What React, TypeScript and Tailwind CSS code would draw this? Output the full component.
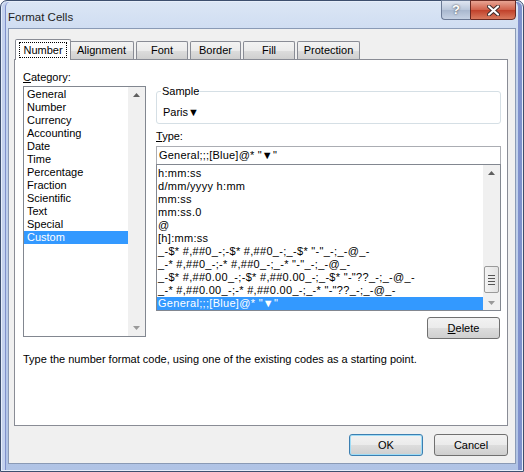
import React from "react";

const categories = [
  "General",
  "Number",
  "Currency",
  "Accounting",
  "Date",
  "Time",
  "Percentage",
  "Fraction",
  "Scientific",
  "Text",
  "Special",
  "Custom",
];

const formats = [
  "h:mm:ss",
  "d/mm/yyyy h:mm",
  "mm:ss",
  "mm:ss.0",
  "@",
  "[h]:mm:ss",
  '_-$* #,##0_-;-$* #,##0_-;_-$* "-"_-;_-@_-',
  '_-* #,##0_-;-* #,##0_-;_-* "-"_-;_-@_-',
  '_-$* #,##0.00_-;-$* #,##0.00_-;_-$* "-"??_-;_-@_-',
  '_-* #,##0.00_-;-* #,##0.00_-;_-* "-"??_-;_-@_-',
  'General;;;[Blue]@* "▼"',
];

const tabs = [
  { t: "Alignment", w: "w-[65px] -ml-[2px]" },
  { t: "Font", w: "w-[52px] ml-[2px]" },
  { t: "Border", w: "w-[51px] ml-[2px]" },
  { t: "Fill", w: "w-[52px] ml-[2px]" },
  { t: "Protection", w: "w-[63px] ml-[2px]" },
];

function Arrow({ up }: { up?: boolean }) {
  return (
    <svg width="7" height="4" viewBox="0 0 7 4" className="block">
      {up ? <path d="M0 4 L3.5 0 L7 4 Z" fill="#5f5f5f" /> : <path d="M0 0 L3.5 4 L7 0 Z" fill="#9a9a9a" />}
    </svg>
  );
}

function Btn({ children, def, w }: { children: React.ReactNode; def?: boolean; w: string }) {
  return (
    <div
      className={`${w} h-[22px] rounded-[3px] border flex items-center justify-center text-[11px] text-black ${
        def ? "border-[#3c7fb1] shadow-[inset_0_0_0_1px_#9fdcf6]" : "border-[#707070]"
      } bg-[linear-gradient(#f2f2f2_0%,#ebebeb_50%,#dddddd_51%,#cfcfcf_100%)]`}
    >
      {children}
    </div>
  );
}

export default function App() {
  return (
    <div className="w-[524px] h-[472px] overflow-hidden bg-white" style={{ fontFamily: '"Liberation Sans", Arial, sans-serif' }}>
      <div className="w-[524px] h-[472px] rounded-t-[7px] border border-[#3d4f6e] bg-[linear-gradient(180deg,#dbe6f5_0%,#c4d4ee_12%,#bccdea_60%,#b0c3e5_100%)] shadow-[inset_0_0_0_1px_#e6eefa,inset_3px_0_0_1px_#c4d2ee,inset_5px_0_0_0_#8091cc,inset_-5px_0_0_0_#8091cc] flex flex-col">
        {/* title bar */}
        <div className="h-[27px] flex items-start">
          <div className="pl-[7px] pt-[8px] text-[11.5px] text-[#1e1e1e] flex-1">Format Cells</div>
          <div className="flex mr-[7px] -mt-px">
            <div className="w-[29px] h-[20px] rounded-bl-[4px] border border-[#6b7a95] border-r-0 bg-[linear-gradient(#dfe6f1,#b9c6da_50%,#a8b7ce_51%,#c6d2e4)] flex items-center justify-center text-white font-bold text-[13px] [text-shadow:0_0_2px_#333]">
              ?
            </div>
            <div className="w-[46px] h-[20px] rounded-br-[4px] border border-[#6b2a22] bg-[linear-gradient(#e8a493,#d0604a_50%,#c0402a_51%,#d97a5e)] flex items-center justify-center">
              <svg width="13" height="11" viewBox="0 0 13 11">
                <path d="M2 1.5 L11 9.5 M11 1.5 L2 9.5" stroke="#3a2a2a" strokeWidth="4" strokeLinecap="round" />
                <path d="M2 1.5 L11 9.5 M11 1.5 L2 9.5" stroke="#ffffff" strokeWidth="2.2" strokeLinecap="round" />
              </svg>
            </div>
          </div>
        </div>

        {/* client area */}
        <div className="ml-[7px] mr-[7px] h-[436px] bg-[#f0f0f0] border border-[#8a9ab5]">
          {/* tabs */}
          <div className="flex items-end h-[30px] pl-[6px] pt-[9px]">
            <div className="w-[56px] h-[21px] bg-white border border-[#898c95] border-b-0 rounded-t-[2px] flex items-center justify-center relative z-10 -mb-px pb-px">
              <span className="border border-dotted border-black px-[3px] text-[11px] leading-[14px]">Number</span>
            </div>
            {tabs.map(({ t, w }) => (
              <div
                key={t}
                className={`${w} h-[18px] rounded-t-[2px] border border-[#898c95] border-b-0 bg-[linear-gradient(#f3f3f3,#ebebeb_50%,#dddddd_51%,#cfcfcf)] flex items-center justify-center text-[11px]`}
              >
                {t}
              </div>
            ))}
          </div>

          {/* panel */}
          <div className="ml-[5px] w-[494px] h-[367px] bg-white border border-[#898c95] flex flex-col">
            <div className="flex">
              {/* category column */}
              <div className="ml-[8px] mt-[10px] w-[123px]">
                <div className="text-[11px] leading-[14px] h-[16px]">
                  <span className="underline">C</span>ategory:
                </div>
                <div className="w-[123px] h-[251px] border border-[#828790] flex">
                  <div className="flex-1 pt-px">
                    {categories.map((c) => (
                      <div
                        key={c}
                        className={`h-[13px] leading-[13px] text-[11px] pl-[3px] ${
                          c === "Custom" ? "bg-[#3399ff] text-white" : ""
                        }`}
                      >
                        {c}
                      </div>
                    ))}
                  </div>
                  <div className="w-[17px] bg-[#f0f0f0] flex flex-col justify-between items-center py-[6px]">
                    <Arrow up />
                    <Arrow />
                  </div>
                </div>
              </div>

              {/* right column */}
              <div className="ml-[10px] w-[345px] flex flex-col">
                <fieldset className="mt-[25px] h-[39px] border border-[#d5dfe5] rounded-[3px] pl-[6px] pr-2">
                  <legend className="text-[11px] leading-[12px] px-[1px] -ml-[2px]">Sample</legend>
                  <div className="text-[11px] leading-[14px] mt-[8px]">Paris▼</div>
                </fieldset>
                <div className="text-[11px] leading-[14px] mt-[5px]">
                  <span className="underline">T</span>ype:
                </div>
                <div className="mt-[3px] h-[19px] border border-[#abadb3] text-[11px] tracking-[0.2px] leading-[17px] pl-[2px]">
                  General;;;[Blue]@* "▼"
                </div>
                <div className="h-[147px] border border-[#828790] flex -mt-px">
                  <div className="flex-1 pt-[2px]">
                    {formats.map((f, i) => (
                      <div
                        key={i}
                        className={`h-[13px] leading-[13px] text-[11px] tracking-[0.3px] pl-[1px] whitespace-pre ${
                          i === formats.length - 1 ? "bg-[#3399ff] text-white" : ""
                        }`}
                      >
                        {f}
                      </div>
                    ))}
                  </div>
                  <div className="w-[17px] bg-[#f0f0f0] flex flex-col items-center pt-[6px] pb-[5px]">
                    <Arrow up />
                    <div className="flex-1" />
                    <div className="w-[15px] h-[27px] rounded-[2px] border border-[#9a9a9a] bg-[linear-gradient(90deg,#f3f3f3,#e3e3e3)] flex flex-col items-center justify-center gap-[2px] mb-[8px]">
                      <div className="w-[7px] h-px bg-[#555]" />
                      <div className="w-[7px] h-px bg-[#555]" />
                      <div className="w-[7px] h-px bg-[#555]" />
                      <div className="w-[7px] h-px bg-[#555]" />
                    </div>
                    <Arrow />
                  </div>
                </div>
                <div className="flex justify-end mt-[6px] pr-px">
                  <Btn w="w-[73px]">
                    <span className="underline">D</span>elete
                  </Btn>
                </div>
              </div>
            </div>
            <div className="ml-[8px] mt-[13px] text-[11px] leading-[14px]">
              Type the number format code, using one of the existing codes as a starting point.
            </div>
          </div>

          {/* buttons */}
          <div className="flex justify-end gap-[11px] mr-[7px] mt-[8px]">
            <Btn w="w-[74px]" def>
              OK
            </Btn>
            <Btn w="w-[74px]">Cancel</Btn>
          </div>
        </div>
      </div>
    </div>
  );
}
